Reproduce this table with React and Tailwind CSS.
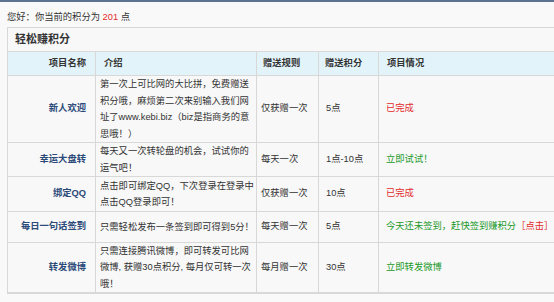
const rows = [
  {
    name: '新人欢迎',
    intro: ['第一次上可比网的大比拼，免费赠送', '积分哦，麻烦第二次来别输入我们网', '址了www.kebi.biz（biz是指商务的意', '思哦！）'],
    rule: '仅获赠一次',
    points: '5点',
    status: <span className="text-[#e22b2b]">已完成</span>,
    h: 'h-[67px]',
  },
  {
    name: '幸运大盘转',
    intro: ['每天又一次转轮盘的机会，试试你的', '运气吧！'],
    rule: '每天一次',
    points: '1点-10点',
    status: <span className="text-[#22992a]">立即试试！</span>,
    h: 'h-[34px]',
  },
  {
    name: '绑定QQ',
    intro: ['点击即可绑定QQ，下次登录在登录中', '点击QQ登录即可！'],
    rule: '仅获赠一次',
    points: '10点',
    status: <span className="text-[#e22b2b]">已完成</span>,
    h: 'h-[35px]',
  },
  {
    name: '每日一句话签到',
    intro: ['只需轻松发布一条签到即可得到5分！'],
    rule: '每天赠一次',
    points: '5点',
    status: (
      <>
        <span className="text-[#22992a]">今天还未签到，赶快签到赚积分</span>
        <span className="text-[#e22b2b]"> ［点击］</span>
      </>
    ),
    h: 'h-[31px]',
  },
  {
    name: '转发微博',
    intro: ['只需连接腾讯微博，即可转发可比网', '微博, 获赠30点积分, 每月仅可转一次', '哦！'],
    rule: '每月赠一次',
    points: '30点',
    status: <span className="text-[#22992a]">立即转发微博</span>,
    h: 'h-[50px]',
  },
];

export default function App() {
  return (
    <div
      className="w-[554px] h-[302px] overflow-hidden bg-[#f9f9f9] text-[#333] text-[9.3px]"
      style={{ fontFamily: '"Liberation Sans", "Noto Sans CJK SC", sans-serif' }}
    >
      <div className="h-[2px] bg-[#5b7391]" />
      <div className="h-[25px] pt-[9px] pl-[7px] leading-[12px]">
        您好：你当前的积分为 <span className="text-[#e22b2b]">201</span> 点
      </div>

      <div className="ml-[7px] w-[600px] border border-[#d8d8d8] bg-[#f8f8f8]">
        {/* title */}
        <div className="h-[24px] flex items-center pl-[7px] border-b border-[#d8d8d8] text-[11px] font-bold text-[#333]">
          轻松赚积分
        </div>

        {/* head */}
        <div className="flex h-[24px] border-b border-[#d8d8d8] bg-[#e2f3fa] font-bold">
          <div className="w-[88px] border-r border-[#d8d8d8] flex items-center justify-end pr-[9px]">项目名称</div>
          <div className="w-[161px] border-r border-[#d8d8d8] flex items-center pl-[8px]">介绍</div>
          <div className="w-[62px] border-r border-[#d8d8d8] flex items-center pl-[6px]">赠送规则</div>
          <div className="w-[60px] border-r border-[#d8d8d8] flex items-center pl-[6px]">赠送积分</div>
          <div className="flex-1 flex items-center pl-[8px]">项目情况</div>
        </div>

        {rows.map((r) => (
          <div key={r.name} className={`flex border-b border-[#d8d8d8] ${r.h}`}>
            <div className="w-[88px] border-r border-[#d8d8d8] flex items-center justify-end pr-[9px] font-bold text-[#2b4a78]">
              {r.name}
            </div>
            <div className="w-[161px] border-r border-[#d8d8d8] flex flex-col justify-center pl-[4px] leading-[16.5px] whitespace-nowrap overflow-hidden">
              {r.intro.map((l, i) => (
                <div key={i}>{l}</div>
              ))}
            </div>
            <div className="w-[62px] border-r border-[#d8d8d8] flex items-center pl-[4px] whitespace-nowrap">{r.rule}</div>
            <div className="w-[60px] border-r border-[#d8d8d8] flex items-center pl-[7px] whitespace-nowrap">{r.points}</div>
            <div className="flex-1 flex items-center pl-[7px] whitespace-nowrap">{r.status}</div>
          </div>
        ))}
      </div>
    </div>
  );
}
